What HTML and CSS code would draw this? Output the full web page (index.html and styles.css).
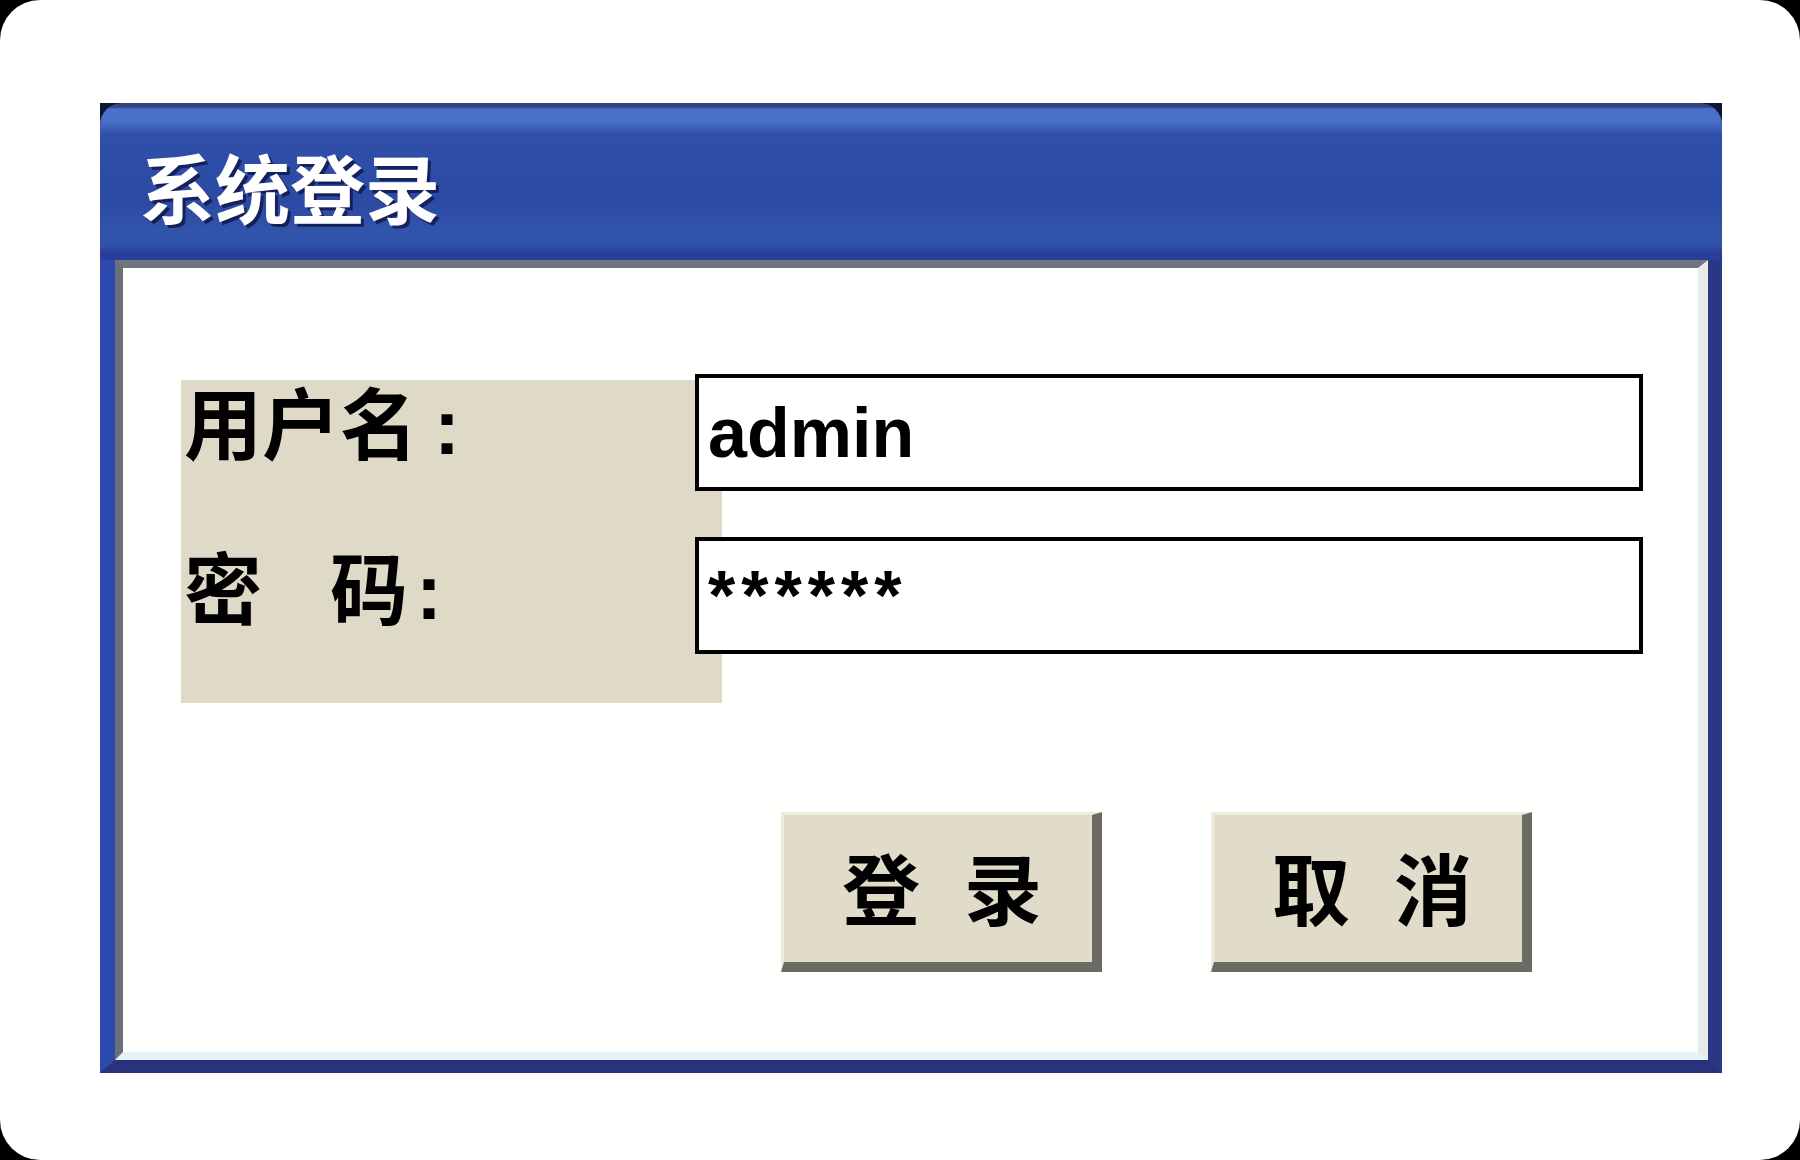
FILE: index.html
```html
<!DOCTYPE html>
<html lang="zh-CN">
<head>
<meta charset="utf-8">
<title>系统登录</title>
<link rel="stylesheet" href="styles.css">
</head>
<body>
<div class="screen">
  <div class="window">
    <div class="titlebar"><h1 class="title">系统登录</h1></div>
    <div class="frame">
      <div class="panel">
        <div class="form">
          <div class="labels">
            <label class="label">用户名<span class="colon colon-wide">:</span></label>
            <label class="label">密<span class="sp">　</span>码<span class="colon">:</span></label>
          </div>
          <div class="fields">
            <input class="field" type="text" value="admin">
            <input class="field field-pass" type="text" value="******">
          </div>
        </div>
        <div class="actions">
          <button class="btn" type="button"><span>登</span><span>录</span></button>
          <button class="btn" type="button"><span>取</span><span>消</span></button>
        </div>
      </div>
    </div>
  </div>
</div>
</body>
</html>
```

FILE: styles.css
```css
html, body {
  margin: 0;
  padding: 0;
  background: #000;
}

.screen {
  width: 1800px;
  height: 1160px;
  box-sizing: border-box;
  background: #fff;
  border-radius: 40px;
  padding: 103px 0 0 100px;
  overflow: hidden;
}

.window {
  width: 1622px;
  height: 970px;
  display: flex;
  flex-direction: column;
  background: #0f1634;
}

.titlebar {
  height: 157px;
  flex: none;
  box-sizing: border-box;
  padding: 8px 0 0 40px;
  display: flex;
  align-items: center;
  border-radius: 22px 22px 0 0;
  background: linear-gradient(to bottom,
    #33457e 0, #33457e 4px,
    #4a72cc 6px, #4870c8 18px,
    #2f4fa8 32px, #2c4aa4 100px,
    #3254aa 130px, #3052a8 142px,
    #283e9a 150px, #283e9a 157px);
}

.title {
  margin: 0;
  font: 700 75px/1 "Noto Sans CJK SC", sans-serif;
  color: #fff;
  text-shadow: 3px 3px 0 #16205a;
}

.frame {
  flex: 1;
  display: flex;
  border-left: 15px solid #2d49ad;
  border-right: 14px solid #2a3784;
  border-bottom: 13px solid #29337c;
}

.panel {
  flex: 1;
  display: flex;
  flex-direction: column;
  border-style: solid;
  border-width: 8px 10px 8px 8px;
  border-color: #6e7680 #e6ebe6 #e8f3f8 #69707a;
  background: #fffffe;
}

.form {
  display: flex;
  align-items: flex-start;
  margin: 106px 0 0 58px;
}

.labels {
  width: 541px;
  height: 323px;
  flex: none;
  margin-top: 6px;
  box-sizing: border-box;
  padding: 1px 0 0 3px;
  background: #dfdac7;
  display: flex;
  flex-direction: column;
  gap: 87px;
}

.label {
  display: block;
  white-space: nowrap;
  font: 700 78px/78px "Noto Sans CJK SC", sans-serif;
  color: #000;
}

.sp {
  font-size: 68px;
  line-height: 0;
}

.colon {
  font-family: "Liberation Sans", sans-serif;
  font-weight: 900;
  line-height: 0;
  margin-left: 8px;
}

.colon-wide {
  margin-left: 16px;
}

.fields {
  margin-left: -27px;
  width: 948px;
  flex: none;
  display: flex;
  flex-direction: column;
  gap: 46px;
}

.field {
  box-sizing: border-box;
  width: 948px;
  height: 117px;
  margin: 0;
  border: 4px solid #000;
  border-radius: 0;
  padding: 0 0 0 9px;
  background: #fff;
  color: #000;
  font: 700 70px "Liberation Sans", sans-serif;
  outline: none;
}

.field-pass {
  letter-spacing: 6px;
}

.actions {
  display: flex;
  gap: 109px;
  margin: 109px 0 0 658px;
}

.btn {
  box-sizing: border-box;
  width: 321px;
  height: 160px;
  margin: 0;
  padding: 0 0 6px 8px;
  border-style: solid;
  border-width: 3px 10px 10px 3px;
  border-color: #efebdd #6c6b63 #6c6b63 #efebdd;
  border-radius: 0;
  background: #e1dcc9;
  display: flex;
  justify-content: center;
  align-items: center;
  gap: 44px;
  font: 700 78px/1 "Noto Sans CJK SC", sans-serif;
  color: #000;
}
```
